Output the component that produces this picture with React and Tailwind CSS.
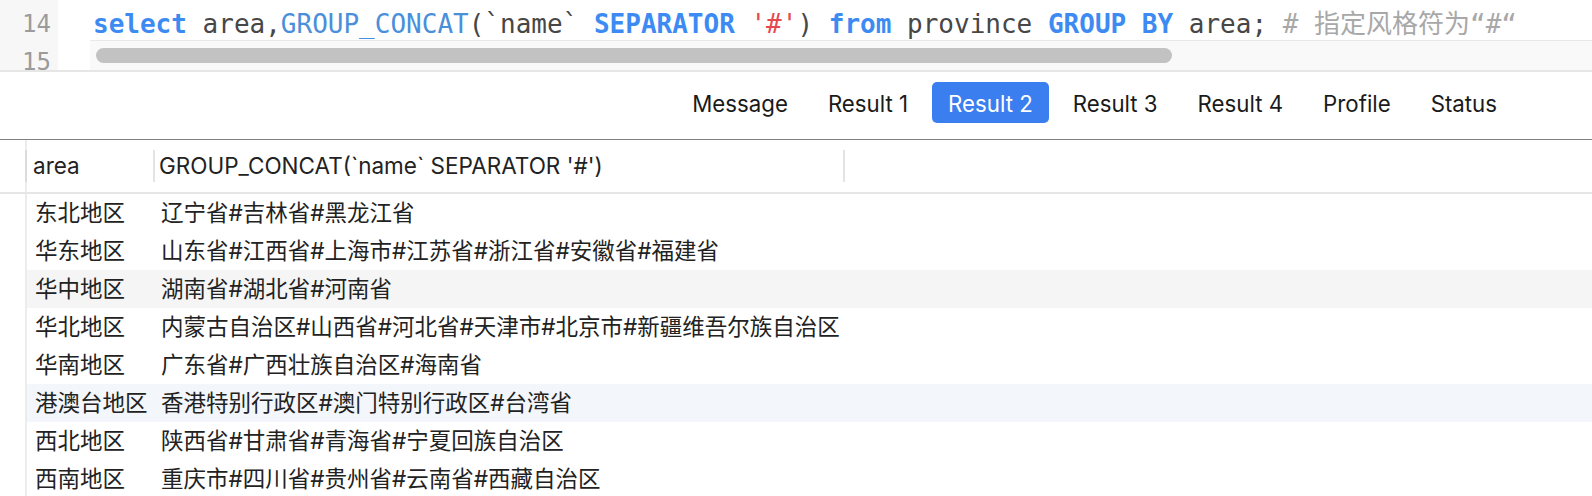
import React from 'react';

const uiFont = { fontFamily: "Inter, 'Noto Sans CJK SC', sans-serif" };
const monoFont = { fontFamily: "'DejaVu Sans Mono', 'Noto Sans CJK SC', monospace" };

const tabs = ['Message', 'Result 1', 'Result 2', 'Result 3', 'Result 4', 'Profile', 'Status'];

const rows = [
  { area: '东北地区', names: '辽宁省#吉林省#黑龙江省' },
  { area: '华东地区', names: '山东省#江西省#上海市#江苏省#浙江省#安徽省#福建省' },
  { area: '华中地区', names: '湖南省#湖北省#河南省', bg: 'bg-[#f5f5f5]' },
  { area: '华北地区', names: '内蒙古自治区#山西省#河北省#天津市#北京市#新疆维吾尔族自治区' },
  { area: '华南地区', names: '广东省#广西壮族自治区#海南省' },
  { area: '港澳台地区', names: '香港特别行政区#澳门特别行政区#台湾省', bg: 'bg-[#f3f6fa]' },
  { area: '西北地区', names: '陕西省#甘肃省#青海省#宁夏回族自治区' },
  { area: '西南地区', names: '重庆市#四川省#贵州省#云南省#西藏自治区' },
];

const Editor = () => (
  <div className="relative flex h-[72px] border-b-2 border-[#e6e6e6] overflow-hidden">
    <div className="w-[58px] bg-[#f7f7f7] pt-[5px] pr-[7px] text-right text-[24px] leading-[38px] text-[#9b9b9b]" style={monoFont}>
      <div>14</div>
      <div>15</div>
    </div>
    <div className="flex-1 pl-[35px] pt-[5px] whitespace-pre text-[26px] leading-[38px] text-[#474747]" style={monoFont}>
      <span className="font-bold text-[#3d8bf2]">select</span>
      <span> area,</span>
      <span className="text-[#4a8fd9]">GROUP_CONCAT</span>
      <span>(`name` </span>
      <span className="font-bold text-[#3d8bf2]">SEPARATOR</span>
      <span> </span>
      <span className="text-[#e5484d]">'#'</span>
      <span>) </span>
      <span className="font-bold text-[#3d8bf2]">from</span>
      <span> province </span>
      <span className="font-bold text-[#3d8bf2]">GROUP BY</span>
      <span> area; </span>
      <span className="text-[#a8a8a8]"># 指定风格符为“#“</span>
    </div>
    {/* horizontal scrollbar over line 15 */}
    <div className="absolute left-[90px] right-0 top-[40px] h-[30px] border-t border-[#e9e9e9] bg-[#f9f9f9]">
      <div className="mt-[7px] ml-[6px] h-[15px] w-[1076px] rounded-full bg-[#c2c2c2]" />
    </div>
  </div>
);

const Tabs = () => (
  <div className="flex h-[68px] items-start justify-end gap-2 border-b border-[#808080] pt-[10px] pr-[79px]" style={uiFont}>
    {tabs.map((t) => (
      <div
        key={t}
        className={
          t === 'Result 2'
            ? 'flex h-[41px] items-center rounded-[5px] bg-[#3a7ef0] px-4 pt-[3px] text-[22.25px] text-white'
            : 'flex h-[41px] items-center px-4 pt-[3px] text-[22.25px] text-[#1a1a1a]'
        }
      >
        {t}
      </div>
    ))}
  </div>
);

const ResultTable = () => (
  <div className="text-[22.5px] text-[#222]" style={uiFont}>
    <div className="flex h-[54px] border-b-2 border-[#e6e6e6]">
      <div className="w-[25px]" />
      <div className="flex w-[2px] items-center bg-[#ececec]">
        <div className="h-[32px] w-[2px] bg-[#dcdcdc]" />
      </div>
      <div className="flex w-[126px] items-center pl-[6px]">area</div>
      <div className="flex items-center">
        <div className="h-[32px] w-[2px] bg-[#e3e3e3]" />
      </div>
      <div className="flex w-[688px] items-center pl-[4px] whitespace-nowrap">GROUP_CONCAT(`name` SEPARATOR '#')</div>
      <div className="flex items-center">
        <div className="h-[32px] w-[2px] bg-[#e3e3e3]" />
      </div>
      <div className="flex-1" />
    </div>
    {rows.map((r) => (
      <div key={r.area} className={`flex h-[38px] ${r.bg || ''}`}>
        <div className="w-[25px] bg-white" />
        <div className="w-[2px] bg-[#ececec]" />
        <div className="flex w-[126px] items-center pl-[8px] whitespace-nowrap">{r.area}</div>
        <div className="flex flex-1 items-center pl-[8px] whitespace-nowrap">{r.names}</div>
      </div>
    ))}
  </div>
);

export default function App() {
  return (
    <div className="h-[496px] w-[1592px] overflow-hidden bg-white">
      <Editor />
      <Tabs />
      <ResultTable />
    </div>
  );
}
